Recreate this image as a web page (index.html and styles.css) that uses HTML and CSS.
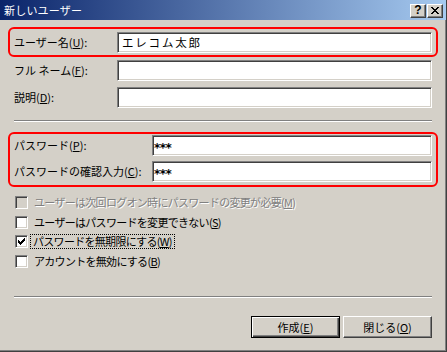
FILE: index.html
```html
<!DOCTYPE html>
<html lang="ja">
<head>
<meta charset="utf-8">
<title>新しいユーザー</title>
<link rel="stylesheet" href="styles.css">
</head>
<body>
<div class="window">
  <div class="caption">
    <span class="caption-title">新しいユーザー</span>
    <div class="caption-buttons">
      <span class="cbtn help">?</span>
      <span class="cbtn close"><svg width="8" height="7" viewBox="0 0 8 7" shape-rendering="crispEdges"><path d="M0 0h2v1h-2zM6 0h2v1h-2zM1 1h2v1h-2zM5 1h2v1h-2zM2 2h4v1h-4zM3 3h2v1h-2zM2 4h4v1h-4zM1 5h2v1h-2zM5 5h2v1h-2zM0 6h2v1h-2zM6 6h2v1h-2z" fill="#000"/></svg></span>
    </div>
  </div>
  <div class="client">
    <div class="highlight hl-user">
      <div class="row">
        <span class="lbl lbl-short">ユーザー名(<u>U</u>):</span>
        <div class="field name">エレコム太郎</div>
      </div>
    </div>
    <div class="row plain r-full">
      <span class="lbl lbl-short">フル ネーム(<u>F</u>):</span>
      <div class="field"></div>
    </div>
    <div class="row plain r-desc">
      <span class="lbl lbl-short">説明(<u>D</u>):</span>
      <div class="field"></div>
    </div>
    <div class="sep sep1"></div>
    <div class="highlight hl-pass">
      <div class="row">
        <span class="lbl lbl-long">パスワード(<u>P</u>):</span>
        <div class="field pw">***</div>
      </div>
      <div class="row r-confirm">
        <span class="lbl lbl-long">パスワードの確認入力(<u>C</u>):</span>
        <div class="field pw">***</div>
      </div>
    </div>
    <div class="checks">
      <div class="check disabled">
        <span class="box"></span>
        <span class="check-text">ユーザーは次回ログオン時にパスワードの変更が必要(<u>M</u>)</span>
      </div>
      <div class="check">
        <span class="box"></span>
        <span class="check-text">ユーザーはパスワードを変更できない(<u>S</u>)</span>
      </div>
      <div class="check">
        <span class="box"><svg width="7" height="7" viewBox="0 0 7 7" shape-rendering="crispEdges"><path d="M0 2h1v1h1v1h1v-1h1v-1h1v-1h1v-1h1v3h-1v1h-1v1h-1v1h-1v1h-1v-1h-1v-1h-1z" fill="#000"/></svg></span>
        <span class="check-text focus">パスワードを無期限にする(<u>W</u>)</span>
      </div>
      <div class="check">
        <span class="box"></span>
        <span class="check-text">アカウントを無効にする(<u>B</u>)</span>
      </div>
    </div>
    <div class="sep sep2"></div>
    <div class="buttons">
      <div class="btn default">作成(<u>E</u>)</div>
      <div class="btn">閉じる(<u>O</u>)</div>
    </div>
  </div>
</div>
</body>
</html>
```

FILE: styles.css
```css
html, body {
  margin: 0;
  padding: 0;
  background: #d4d0c8;
}

body {
  font-family: "Noto Sans CJK JP", "Noto Sans", sans-serif;
  font-size: 11px;
  color: #000;
}

.window {
  width: 447px;
  height: 352px;
  box-sizing: border-box;
  display: flex;
  flex-direction: column;
  background: #d4d0c8;
  border-right: 1px solid #404040;
  border-bottom: 1px solid #404040;
  box-shadow: inset -1px -1px 0 #808080;
  overflow: hidden;
}

/* title bar */
.caption {
  height: 20px;
  flex: none;
  display: flex;
  align-items: center;
  padding: 0 4px 0 4px;
  background: linear-gradient(to right, #0a246a, #a6caf0);
  margin-right: -1px;
}

.caption-title {
  color: #fff;
  font-size: 11px;
  line-height: 1;
  letter-spacing: 0.2px;
}

.caption-buttons {
  margin-left: auto;
  display: flex;
  gap: 1px;
  padding-top: 1px;
}

.cbtn {
  width: 16px;
  height: 14px;
  box-sizing: border-box;
  display: flex;
  align-items: center;
  justify-content: center;
  background: #d4d0c8;
  border-top: 1px solid #fff;
  border-left: 1px solid #fff;
  border-right: 1px solid #404040;
  border-bottom: 1px solid #404040;
  box-shadow: inset -1px -1px 0 #808080;
}

.help {
  font-family: "Liberation Sans", "DejaVu Sans", sans-serif;
  font-weight: bold;
  font-size: 12px;
  line-height: 1;
  padding-bottom: 1px;
}

/* client area */
.client {
  flex: 1;
  display: flex;
  flex-direction: column;
}

.highlight {
  border: 2px solid #ff0000;
  border-radius: 6px;
  margin-left: 8px;
  margin-right: 8px;
}

.hl-user {
  margin-top: 7px;
  padding: 3px 4px 2px 4px;
}

.hl-pass {
  margin-top: 10px;
  padding: 1px 4px 3px 4px;
  display: flex;
  flex-direction: column;
  gap: 5px;
}

.row {
  display: flex;
  align-items: center;
}

.row.plain {
  margin-left: 14px;
  margin-right: 14px;
}

.r-full {
  margin-top: 3px;
}

.r-desc {
  margin-top: 6px;
}

.lbl {
  flex: none;
  white-space: nowrap;
  line-height: 1;
}

.lbl-short {
  width: 103px;
}

.lbl-long {
  width: 138px;
}

.field {
  flex: 1;
  height: 21px;
  box-sizing: border-box;
  background: #fff;
  border-top: 1px solid #808080;
  border-left: 1px solid #808080;
  border-right: 1px solid #fff;
  border-bottom: 1px solid #fff;
  box-shadow: inset 1px 1px 0 #404040, inset -1px -1px 0 #d4d0c8;
  display: flex;
  align-items: center;
  padding: 0 3px;
  font-size: 11px;
  line-height: 1;
  white-space: nowrap;
}

.field.name {
  padding-left: 4px;
  font-size: 11.5px;
  letter-spacing: 1.8px;
}

.field.pw {
  padding-left: 1px;
  font-family: "DejaVu Sans", sans-serif;
  font-weight: bold;
  font-size: 12px;
  padding-top: 4px;
  letter-spacing: -0.5px;
}

/* separators */
.sep {
  height: 0;
  border-top: 1px solid #808080;
  border-bottom: 1px solid #fff;
  margin-left: 14px;
  margin-right: 14px;
}

.sep1 {
  margin-top: 12px;
}

.sep2 {
  margin-top: 25px;
}

/* checkboxes */
.checks {
  margin-top: 6px;
  margin-left: 15px;
  display: flex;
  flex-direction: column;
}

.check {
  height: 19.5px;
  display: flex;
  align-items: center;
}

.box {
  flex: none;
  width: 13px;
  height: 13px;
  box-sizing: border-box;
  background: #fff;
  border-top: 1px solid #808080;
  border-left: 1px solid #808080;
  border-right: 1px solid #fff;
  border-bottom: 1px solid #fff;
  box-shadow: inset 1px 1px 0 #404040, inset -1px -1px 0 #d4d0c8;
  display: flex;
  align-items: center;
  justify-content: center;
}

.check.disabled .box {
  background: #d4d0c8;
}

.check-text {
  margin-left: 5px;
  line-height: 1;
  white-space: nowrap;
  letter-spacing: -0.7px;
  padding: 1px 1px;
}

.check-text.focus {
  margin-left: 3px;
  padding: 1px 2px;
  outline: 1px dotted #000;
  outline-offset: 0;
}

.check.disabled .check-text {
  color: #808080;
  text-shadow: 1px 1px 0 #fff;
}

/* buttons */
.buttons {
  margin-top: 18px;
  margin-right: 14px;
  display: flex;
  justify-content: flex-end;
  gap: 3px;
}

.btn {
  width: 89px;
  height: 22px;
  box-sizing: border-box;
  display: flex;
  align-items: center;
  justify-content: center;
  background: #d4d0c8;
  border-top: 1px solid #fff;
  border-left: 1px solid #fff;
  border-right: 1px solid #404040;
  border-bottom: 1px solid #404040;
  box-shadow: inset -1px -1px 0 #808080;
  line-height: 1;
  white-space: nowrap;
}

.btn.default {
  border: 1px solid #000;
  box-shadow: inset 1px 1px 0 #fff, inset -1px -1px 0 #404040, inset -2px -2px 0 #808080;
}
```
